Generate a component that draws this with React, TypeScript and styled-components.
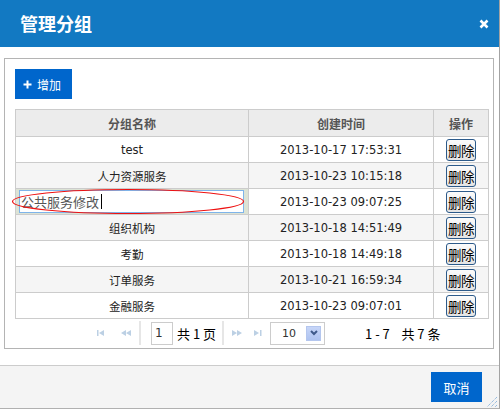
import React from 'react';
import styled, { createGlobalStyle } from 'styled-components';

const GlobalStyle = createGlobalStyle`
  html, body {
    margin: 0;
    padding: 0;
    background: #ffffff;
    font-family: 'DejaVu Sans', 'Noto Sans CJK SC', sans-serif;
  }
`;

const CJK = `'Noto Sans CJK SC', 'DejaVu Sans', sans-serif`;

const Dialog = styled.div`
  box-sizing: border-box;
  width: 500px;
  height: 409px;
  border-right: 1px solid #a3a3a3;
  border-bottom: 1px solid #b0b0b0;
  display: flex;
  flex-direction: column;
  background: #ffffff;
  position: relative;
`;

const Header = styled.div`
  height: 47px;
  flex: none;
  background: #1279c2;
  display: flex;
  align-items: center;
  justify-content: space-between;
  padding: 0 10px 0 20px;
`;

const Title = styled.h1`
  margin: 0;
  font-family: ${CJK};
  font-size: 18px;
  font-weight: 700;
  color: #ffffff;
  margin-top: -2px;
`;

const Body = styled.div`
  flex: 1;
  padding: 11px 0 0 4px;
`;

const Panel = styled.div`
  box-sizing: border-box;
  width: 490px;
  height: 291px;
  border: 1px solid #b4b4b4;
  padding: 10px 0 0 10px;
  display: flex;
  flex-direction: column;
`;

const AddButton = styled.button`
  box-sizing: border-box;
  width: 57px;
  height: 30px;
  border: none;
  background: #0066cc;
  color: #ffffff;
  font-family: ${CJK};
  font-size: 12px;
  display: flex;
  align-items: center;
  gap: 5px;
  padding: 0 0 0 8px;
  margin-bottom: 10px;
`;

const Table = styled.table`
  width: 470px;
  border-collapse: collapse;
  table-layout: fixed;
  border: 1px solid #cccccc;
`;

const HeadCell = styled.th<{ $w: number }>`
  width: ${(p) => p.$w}px;
  height: 26px;
  padding: 0;
  background: #ececec;
  border: 1px solid #cccccc;
  color: #555555;
  font-family: ${CJK};
  font-size: 12px;
  font-weight: 700;
  text-align: center;
`;

const Row = styled.tr<{ $alt?: boolean }>`
  background: ${(p) => (p.$alt ? '#f5f5f5' : '#ffffff')};
`;

const Cell = styled.td<{ $selected?: boolean }>`
  height: 25px;
  padding: 0;
  border: 1px solid #cccccc;
  background: ${(p) => (p.$selected ? '#dce3d5' : 'transparent')};
  color: #222222;
  font-size: 11.5px;
  text-align: center;
  vertical-align: middle;
  position: relative;
`;

const EditBox = styled.div`
  box-sizing: border-box;
  margin: 0 4px 0 3px;
  height: 23px;
  border: 1px solid #7eb4ea;
  background: #ffffff;
  color: #555555;
  font-family: ${CJK};
  font-size: 13px;
  text-align: left;
  display: flex;
  align-items: center;
  padding-left: 1px;
`;

const Caret = styled.span`
  display: inline-block;
  width: 1px;
  height: 15px;
  background: #000000;
  margin-left: 2px;
`;

const Mark = styled.svg`
  position: absolute;
  left: -4px;
  top: 0;
  overflow: visible;
  pointer-events: none;
`;

const DeleteButton = styled.button`
  box-sizing: border-box;
  width: 30px;
  height: 22px;
  padding: 0;
  border: 1px solid #2c5a8a;
  border-radius: 3px;
  background: linear-gradient(#fbfbfb, #e4e4e4);
  color: #000000;
  font-family: ${CJK};
  font-size: 13.5px;
  line-height: 20px;
  letter-spacing: -0.5px;
  display: block;
  margin: 1px auto 0;
`;

const Pager = styled.div`
  height: 28px;
  width: 470px;
  display: flex;
  align-items: center;
  padding-left: 82px;
  box-sizing: border-box;
  font-family: ${CJK};
  font-size: 13px;
  color: #000000;
`;

const PagerIcon = styled.svg<{ $ml: number }>`
  margin-left: ${(p) => p.$ml}px;
  flex: none;
`;

const Separator = styled.span<{ $ml: number }>`
  width: 2px;
  height: 24px;
  background: #e6e6e6;
  margin-left: ${(p) => p.$ml}px;
  flex: none;
`;

const PageInput = styled.div`
  box-sizing: border-box;
  width: 22px;
  height: 23px;
  border: 1px solid #cccccc;
  margin-left: 10px;
  padding-left: 3px;
  display: flex;
  align-items: center;
  font-family: 'DejaVu Sans', sans-serif;
  font-size: 12px;
  color: #333333;
`;

const PagerText = styled.span<{ $ml: number }>`
  margin-left: ${(p) => p.$ml}px;
  white-space: pre;
`;

const SizeSelect = styled.div`
  box-sizing: border-box;
  width: 55px;
  height: 23px;
  border: 1px solid #cccccc;
  margin-left: 8px;
  display: flex;
  align-items: center;
  padding-left: 11px;
  gap: 10px;
  font-family: 'DejaVu Sans', sans-serif;
  font-size: 11px;
  color: #333333;
`;

const SelectArrow = styled.span`
  box-sizing: border-box;
  width: 15px;
  height: 15px;
  background: linear-gradient(#c7d6f8, #aec3f0);
  border: 1px solid #b4c6ee;
  display: flex;
  align-items: center;
  justify-content: center;
`;

const Footer = styled.div`
  box-sizing: border-box;
  height: 43px;
  flex: none;
  background: #f4f4f4;
  border-top: 1px solid #cccccc;
  display: flex;
  justify-content: flex-end;
  align-items: flex-start;
  padding: 6px 17px 0 0;
  position: relative;
`;

const CancelButton = styled.button`
  width: 51px;
  height: 30px;
  border: none;
  background: #0066cc;
  color: #ffffff;
  font-family: ${CJK};
  font-size: 13px;
  padding: 0;
`;

const Grip = styled.svg`
  position: absolute;
  right: 1px;
  bottom: 0;
`;

type Group = { name: string; time: string };

const groups: Group[] = [
  { name: 'test', time: '2013-10-17 17:53:31' },
  { name: '人力资源服务', time: '2013-10-23 10:15:18' },
  { name: '公共服务修改', time: '2013-10-23 09:07:25' },
  { name: '组织机构', time: '2013-10-18 14:51:49' },
  { name: '考勤', time: '2013-10-18 14:49:18' },
  { name: '订单服务', time: '2013-10-21 16:59:34' },
  { name: '金融服务', time: '2013-10-23 09:07:01' },
];

const EDIT_ROW = 2;
const iconColor = '#bcd0e4';

export default function App() {
  return (
    <>
      <GlobalStyle />
      <Dialog>
        <Header>
          <Title>管理分组</Title>
          <svg width="10" height="10" viewBox="0 0 10 10">
            <path d="M1.5 1.5 L8.5 8.5 M8.5 1.5 L1.5 8.5" stroke="#ffffff" strokeWidth="2.6" />
          </svg>
        </Header>
        <Body>
          <Panel>
            <AddButton>
              <svg width="9" height="9" viewBox="0 0 9 9">
                <path d="M4.5 0.5 V8.5 M0.5 4.5 H8.5" stroke="#ffffff" strokeWidth="2" />
              </svg>
              增加
            </AddButton>
            <Table>
              <thead>
                <tr>
                  <HeadCell $w={232}>分组名称</HeadCell>
                  <HeadCell $w={184}>创建时间</HeadCell>
                  <HeadCell $w={54}>操作</HeadCell>
                </tr>
              </thead>
              <tbody>
                {groups.map((g, i) => (
                  <Row key={g.time} $alt={i % 2 === 1}>
                    {i === EDIT_ROW ? (
                      <Cell $selected>
                        <EditBox>
                          {g.name}
                          <Caret />
                        </EditBox>
                        <Mark width="232" height="25">
                          <ellipse cx="116" cy="12.5" rx="115.5" ry="12" fill="none" stroke="#ee1111" strokeWidth="1.2" />
                        </Mark>
                      </Cell>
                    ) : (
                      <Cell>{g.name}</Cell>
                    )}
                    <Cell>{g.time}</Cell>
                    <Cell>
                      <DeleteButton>删除</DeleteButton>
                    </Cell>
                  </Row>
                ))}
              </tbody>
            </Table>
            <Pager>
              <PagerIcon $ml={0} width="8" height="6" viewBox="0 0 8 6">
                <rect x="0" y="0" width="1.5" height="6" fill={iconColor} />
                <path d="M2 3 L7 0 V6 Z" fill={iconColor} />
              </PagerIcon>
              <PagerIcon $ml={16} width="10" height="6" viewBox="0 0 10 6">
                <path d="M0 3 L5 0 V6 Z M5 3 L10 0 V6 Z" fill={iconColor} />
              </PagerIcon>
              <Separator $ml={8} />
              <PageInput>1</PageInput>
              <PagerText $ml={4}>共 1 页</PagerText>
              <Separator $ml={6} />
              <PagerIcon $ml={8} width="10" height="6" viewBox="0 0 10 6">
                <path d="M0 0 L5 3 L0 6 Z M5 0 L10 3 L5 6 Z" fill={iconColor} />
              </PagerIcon>
              <PagerIcon $ml={12} width="8" height="6" viewBox="0 0 8 6">
                <path d="M0 0 L5 3 L0 6 Z" fill={iconColor} />
                <rect x="6" y="0" width="1.5" height="6" fill={iconColor} />
              </PagerIcon>
              <SizeSelect>
                10
                <SelectArrow>
                  <svg width="8" height="6" viewBox="0 0 8 6">
                    <path d="M1 1 L4 4 L7 1" stroke="#3f5a8a" strokeWidth="2" fill="none" />
                  </svg>
                </SelectArrow>
              </SizeSelect>
              <PagerText $ml={40}>1 - 7    共 7 条</PagerText>
            </Pager>
          </Panel>
        </Body>
        <Footer>
          <CancelButton>取消</CancelButton>
          <Grip width="13" height="13" viewBox="0 0 13 13">
            <path d="M12 2 L2 12 M12 6 L6 12 M12 10 L10 12" stroke="#6fa3d6" strokeWidth="1" strokeDasharray="1 1" />
          </Grip>
        </Footer>
      </Dialog>
    </>
  );
}
